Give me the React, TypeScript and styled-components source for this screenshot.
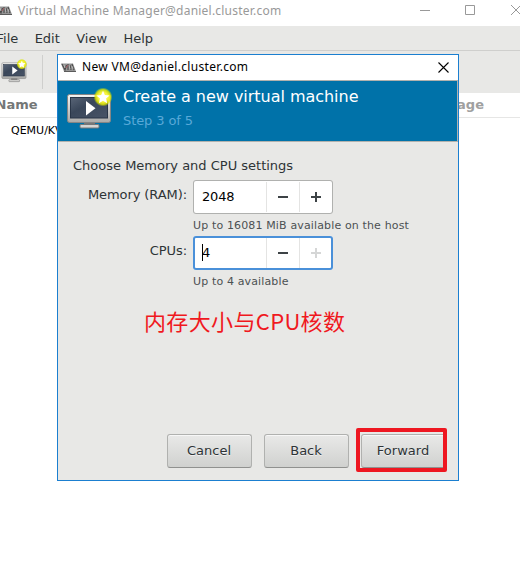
import React from "react";
import styled, { createGlobalStyle } from "styled-components";

const GlobalStyle = createGlobalStyle`
  * { box-sizing: border-box; }
  body { margin: 0; background: #fff; overflow: hidden; }
`;

const gtk = `"DejaVu Sans", sans-serif`;
const win = `"Noto Sans", "Noto Sans CJK SC", sans-serif`;

const Desktop = styled.div`
  position: relative;
  width: 520px;
  height: 562px;
  overflow: hidden;
  background: #fff;
  font-family: ${gtk};
  white-space: nowrap;
`;

const MainTitleBar = styled.header`
  display: flex;
  height: 26px;
  color: #999;
  font: 12px/22px ${win};
`;

const MainIcon = styled.div`
  display: flex;
  justify-content: flex-end;
  width: 12px;
  margin-right: 6px;
  padding-top: 6px;
  line-height: 0;
`;

const MainTitle = styled.span`
  flex: 1;
  letter-spacing: 0.22px;
`;

const MainControls = styled.div`
  width: 104px;
  line-height: 0;
`;

const MenuBar = styled.nav`
  display: flex;
  gap: 16.4px;
  height: 25px;
  margin-left: -3.5px;
  background: #e8e8e6;
  border-bottom: 1px solid #cfcfcd;
  font-size: 13px;
  line-height: 25px;
  color: #2e3436;
`;

const ToolBar = styled.div`
  display: flex;
  height: 42px;
  background: #e8e8e6;
`;

const ToolButton = styled.div`
  width: 43px;
  padding: 7px 0 0 1px;
  line-height: 0;
`;

const ToolSeparator = styled.div`
  width: 1px;
  height: 34px;
  margin-top: 4px;
  margin-left: -1px;
  background: #cfcfcd;
`;

const ColumnHeader = styled.div`
  display: flex;
  justify-content: space-between;
  height: 25px;
  padding: 0 36px 0 0;
  margin-left: -4.5px;
  border-bottom: 1px solid #e6e6e5;
  font-size: 13px;
  font-weight: bold;
  line-height: 23px;
`;

const ColumnName = styled.span<{ $muted?: boolean }>`
  color: ${(p) => (p.$muted ? "#a0a0a0" : "#747777")};
`;

const ConnectionRow = styled.div`
  padding-left: 11px;
  font-size: 11px;
  line-height: 26px;
  color: #000;
`;

const Dialog = styled.section`
  position: absolute;
  left: 57px;
  top: 54px;
  width: 402px;
  height: 427px;
  border: 1px solid #1b7fd0;
  background: #e8e8e6;
`;

const DialogTitleBar = styled.header`
  display: flex;
  align-items: flex-start;
  height: 25px;
  background: #fff;
  color: #000;
  font: 12px/23px ${win};
`;

const DialogIcon = styled.div`
  width: 24px;
  padding: 8px 0 0 3px;
  line-height: 0;
`;

const DialogTitle = styled.span`
  flex: 1;
  letter-spacing: 0.32px;
`;

const CloseButton = styled.div`
  width: 20.5px;
  padding-top: 7px;
  line-height: 0;
`;

const Banner = styled.div`
  display: flex;
  height: 62px;
  background: #0072a9;
  border-top: 1px solid #b2b2ae;
  border-bottom: 1px solid #b2b2ae;
  border-right: 1px solid #b2b2ae;
`;

const BannerIcon = styled.div`
  width: 65px;
  padding: 5px 0 0 8px;
  line-height: 0;
`;

const BannerTitle = styled.div`
  margin-top: 5px;
  color: #fff;
  font-size: 16px;
  letter-spacing: -0.03px;
  line-height: 22px;
`;

const BannerStep = styled.div`
  margin-top: 3px;
  color: #59a9d8;
  font-size: 13px;
  letter-spacing: -0.1px;
  line-height: 20px;
`;

const Content = styled.main`
  height: 292px;
  padding: 14px 0 0 15px;
  color: #2e3436;
  font-size: 13px;
`;

const Intro = styled.div`
  line-height: 20px;
`;

const Field = styled.div`
  display: grid;
  grid-template-columns: 114px 140px;
  column-gap: 6px;
  height: 56px;
  padding-top: 4px;
`;

const Label = styled.label`
  text-align: right;
  letter-spacing: -0.08px;
  line-height: 30px;
`;

const Spin = styled.div<{ $focused?: boolean }>`
  display: grid;
  grid-template-columns: 1fr 33px 34px;
  height: 34px;
  background: #fff;
  border-radius: 3px;
  box-shadow: inset 0 0 0 ${(p) => (p.$focused ? "2px #4a90d9" : "1px #b0b1af")};
`;

const Value = styled.div`
  display: flex;
  align-items: center;
  padding: 0 0 1px 9px;
  letter-spacing: -0.15px;
  color: #000;
`;

const Caret = styled.i<{ $on?: boolean }>`
  width: 1px;
  height: 17px;
  margin-right: -1px;
  background: ${(p) => (p.$on ? "#000" : "transparent")};
`;

const StepButton = styled.div<{ $disabled?: boolean }>`
  margin: 2px 0;
  height: 30px;
  border-left: 1px solid #e4e4e3;
  color: ${(p) => (p.$disabled ? "#d5d6d6" : "#3d4346")};
  line-height: 0;
`;

const Hint = styled.div`
  grid-column: 2;
  font-size: 11px;
  letter-spacing: 0.14px;
  line-height: 18px;
  color: #4c5153;
  margin-top: 3px;
`;

const Actions = styled.footer`
  display: flex;
  gap: 12px;
  padding-left: 109px;
`;

const ActionButton = styled.button`
  width: 85px;
  height: 34px;
  padding: 0 1px 0 0;
  border: 1px solid #b0b1af;
  border-bottom-color: #90918f;
  border-radius: 3px;
  background: linear-gradient(#e9e9e8, #d0d1cf);
  box-shadow: inset 0 1px #f7f7f7;
  color: #2e3436;
  font: 13px/30px ${gtk};
  text-shadow: 0 1px #f0f0f0;
`;

const Annotation = styled.div`
  position: absolute;
  left: 144px;
  top: 304px;
  color: #f01820;
  font: 22px/32px "Noto Sans CJK SC", sans-serif;
  letter-spacing: 0.35px;
`;

const Highlight = styled.div`
  position: absolute;
  left: 356px;
  top: 428px;
  width: 91px;
  height: 44px;
  border: 4px solid #ee1721;
  border-radius: 2px;
`;

const VmLogo = ({ width = 15 }: { width?: number }) => (
  <svg width={width} height="9" viewBox={`${15 - width} 0 ${width} 9`}>
    <path d="M0 .5h12l3 8H3z" fill="#969696" />
    <path d="M1 1l3 6 1.500-5M7 1v6M9 2l1 5M11 1l2 6" fill="none" stroke="#4b4b4b" strokeWidth="1.1" />
    <path d="M3 2l1 3M8 2l1 4M11 3l1 3" stroke="#ccc" strokeWidth=".7" />
    <path d="M5 5l2-3" stroke="#b65a62" strokeWidth=".8" />
    <path d="M3 8.500h12" stroke="#5c5c5c" />
  </svg>
);

const Monitor = ({ size, id }: { size: number; id: string }) => (
  <svg width={size} height={size} viewBox="0 0 48 48">
    <defs>
      <linearGradient id={`${id}-frame`} x2="0" y2="1">
        <stop stopColor="#f4f4f2" />
        <stop offset="1" stopColor="#aaaaa8" />
      </linearGradient>
      <linearGradient id={`${id}-screen`} x2="1" y2="1">
        <stop stopColor="#596577" />
        <stop offset=".4" stopColor="#3a475a" />
        <stop offset="1" stopColor="#485467" />
      </linearGradient>
      <radialGradient id={`${id}-glow`}>
        <stop offset=".5" stopColor="#f8f443" />
        <stop offset=".78" stopColor="#e4ea00" stopOpacity=".85" />
        <stop offset="1" stopColor="#c5dc00" stopOpacity="0" />
      </radialGradient>
    </defs>
    <path d="M18 34h11v6H18z" fill="#777" />
    <rect x="14" y="38.5" width="19" height="3.5" rx="1" fill="#d5d5d3" stroke="#777" />
    <rect x="1.5" y="8.5" width="43" height="28" rx="2" fill={`url(#${id}-frame)`} stroke="#858585" />
    <rect x="4.5" y="11.5" width="37" height="20.5" fill={`url(#${id}-screen)`} stroke="#293547" />
    <path d="M20 15v14.500l9.500-7.250z" fill="#fff" />
    <circle cx="37" cy="11" r="9.500" fill={`url(#${id}-glow)`} />
    <path d="M37 4.700l1.900 4.300 4.700.5-3.500 3.100 1 4.600-4.100-2.400-4.100 2.400 1-4.600-3.500-3.100 4.700-.5z" fill="#fff" />
  </svg>
);

const Minus = () => (
  <svg width="32" height="30" viewBox="0 1 32 30">
    <path d="M11 15h10v2H11z" fill="currentColor" />
  </svg>
);

const Plus = () => (
  <svg width="32" height="30" viewBox="0 1 32 30">
    <path d="M11 15h4v-4h2v4h4v2h-4v4h-2v-4h-4z" fill="currentColor" />
  </svg>
);

interface SpinFieldProps {
  label: string;
  value: string;
  hint: string;
  focused?: boolean;
  atMax?: boolean;
}

const SpinField = ({ label, value, hint, focused, atMax }: SpinFieldProps) => (
  <Field>
    <Label>{label}</Label>
    <Spin $focused={focused}>
      <Value>
        <Caret $on={focused} />
        {value}
      </Value>
      <StepButton><Minus /></StepButton>
      <StepButton $disabled={atMax}><Plus /></StepButton>
    </Spin>
    <Hint>{hint}</Hint>
  </Field>
);

export default function App() {
  return (
    <Desktop>
      <GlobalStyle />
      <MainTitleBar>
        <MainIcon><VmLogo width={12} /></MainIcon>
        <MainTitle>Virtual Machine Manager@daniel.cluster.com</MainTitle>
        <MainControls>
          <svg width="104" height="20" viewBox="416 0 104 20" fill="none" stroke="#999">
            <path d="M420 10.500h10M465.500 5.500h9v9h-9zM511 5l10 10M521 5l-10 10" />
          </svg>
        </MainControls>
      </MainTitleBar>
      <MenuBar>
        <span>File</span>
        <span>Edit</span>
        <span>View</span>
        <span>Help</span>
      </MenuBar>
      <ToolBar>
        <ToolButton><Monitor size={27} id="tool" /></ToolButton>
        <ToolSeparator />
      </ToolBar>
      <ColumnHeader>
        <ColumnName>Name</ColumnName>
        <ColumnName $muted>CPU usage</ColumnName>
      </ColumnHeader>
      <ConnectionRow>QEMU/KVM</ConnectionRow>

      <Dialog>
        <DialogTitleBar>
          <DialogIcon><VmLogo /></DialogIcon>
          <DialogTitle>New VM@daniel.cluster.com</DialogTitle>
          <CloseButton>
            <svg width="11" height="11" viewBox="0 0 11 11" stroke="#000" strokeWidth="1.1">
              <path d="M.5.5l10 10M10.500.5l-10 10" />
            </svg>
          </CloseButton>
        </DialogTitleBar>
        <Banner>
          <BannerIcon><Monitor size={48} id="banner" /></BannerIcon>
          <div>
            <BannerTitle>Create a new virtual machine</BannerTitle>
            <BannerStep>Step 3 of 5</BannerStep>
          </div>
        </Banner>
        <Content>
          <Intro>Choose Memory and CPU settings</Intro>
          <SpinField label="Memory (RAM):" value="2048" hint="Up to 16081 MiB available on the host" />
          <SpinField label="CPUs:" value="4" hint="Up to 4 available" focused atMax />
        </Content>
        <Actions>
          <ActionButton>Cancel</ActionButton>
          <ActionButton>Back</ActionButton>
          <ActionButton>Forward</ActionButton>
        </Actions>
      </Dialog>
      <Annotation>内存大小与CPU核数</Annotation>
      <Highlight />
    </Desktop>
  );
}
